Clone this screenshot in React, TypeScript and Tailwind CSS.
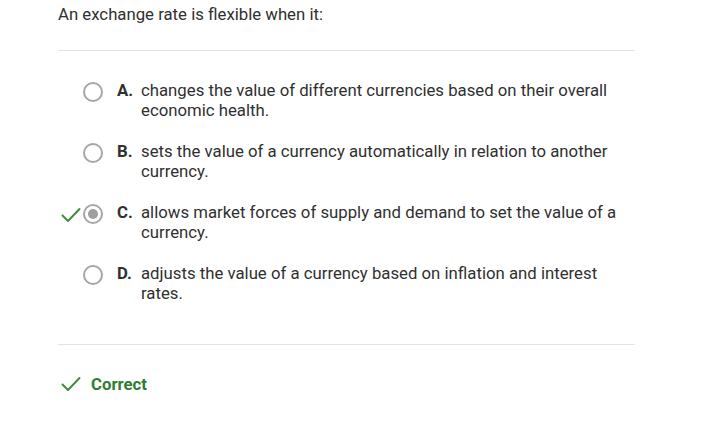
import React from "react";

const options = [
  { letter: "A.", text: "changes the value of different currencies based on their overall economic health.", selected: false },
  { letter: "B.", text: "sets the value of a currency automatically in relation to another currency.", selected: false },
  { letter: "C.", text: "allows market forces of supply and demand to set the value of a currency.", selected: true },
  { letter: "D.", text: "adjusts the value of a currency based on inflation and interest rates.", selected: false },
];

function Check({ className }: { className?: string }) {
  return (
    <svg className={className} width="20" height="16" viewBox="0 0 20 16" fill="none">
      <path d="M1.5 8.5 L7 14 L18.5 2" stroke="currentColor" strokeWidth="2" strokeLinecap="round" strokeLinejoin="round" />
    </svg>
  );
}

export default function App() {
  return (
    <div className="w-[725px] h-[422px] bg-white text-[#303030] text-[16.75px] leading-[20px]" style={{ fontFamily: "Roboto, 'Noto Sans', sans-serif" }}>
      <div className="ml-[58px] w-[577px] pt-[4px]">
        <div>An exchange rate is flexible when it:</div>
        <div className="mt-[26px] h-px bg-[#e3e3e3]" />
        <div className="pt-[29px] flex flex-col gap-[21px]">
          {options.map((o) => (
            <div key={o.letter} className="flex items-start">
              <div className="w-[25px] h-[20px] flex items-center justify-start pt-[6px]">
                {o.selected && <Check className="text-[#3f8f3f] ml-[3px]" />}
              </div>
              <div className="w-[20px] h-[20px] mt-[2px] rounded-full border-2 border-[#a6a6a6] flex items-center justify-center">
                {o.selected && <div className="w-[10px] h-[10px] rounded-full bg-[#9e9e9e]" />}
              </div>
              <div className="ml-[14px] w-[24px] font-bold">{o.letter}</div>
              <div className="w-[482px]">{o.text}</div>
            </div>
          ))}
        </div>
        <div className="mt-[41px] h-px bg-[#e3e3e3]" />
        <div className="pt-[29px] flex items-center">
          <Check className="text-[#3f8f3f] ml-[3px]" />
          <span className="ml-[10px] font-bold text-[#2f7d32]">Correct</span>
        </div>
      </div>
    </div>
  );
}
